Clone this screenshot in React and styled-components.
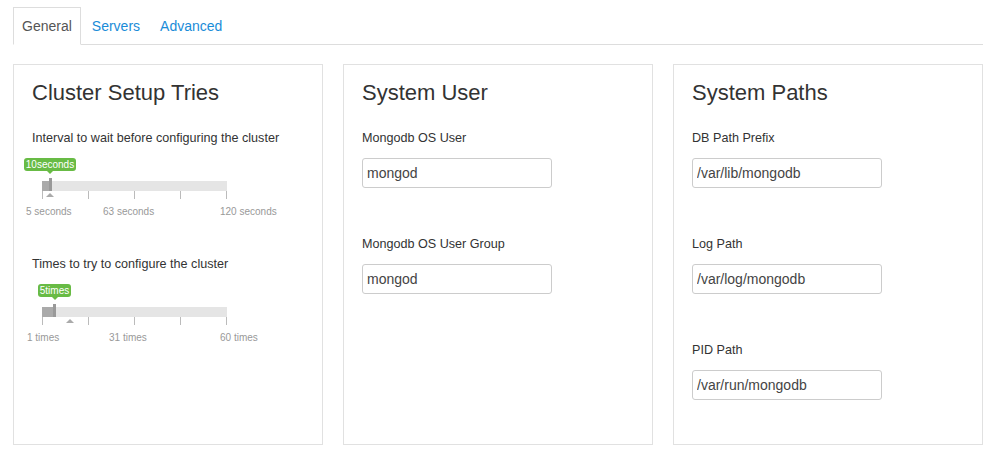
import React from 'react';
import styled, { createGlobalStyle } from 'styled-components';

const GlobalStyle = createGlobalStyle`
  body {
    margin: 0;
    background: #ffffff;
    font-family: "Liberation Sans", Arial, sans-serif;
    color: #333333;
  }
`;

const sliders = [
  {
    label: 'Interval to wait before configuring the cluster',
    value: '10seconds',
    handle: 7,
    marker: 8,
    tipLeft: -18,
    tipWidth: 52,
    grid: [
      { text: '5 seconds', left: -16 },
      { text: '63 seconds', left: 61 },
      { text: '120 seconds', left: 178 },
    ],
  },
  {
    label: 'Times to try to configure the cluster',
    value: '5times',
    handle: 11,
    marker: 28,
    tipLeft: -4,
    tipWidth: 33,
    grid: [
      { text: '1 times', left: -15 },
      { text: '31 times', left: 67 },
      { text: '60 times', left: 178 },
    ],
  },
];

const userFields = [
  { label: 'Mongodb OS User', value: 'mongod' },
  { label: 'Mongodb OS User Group', value: 'mongod' },
];

const pathFields = [
  { label: 'DB Path Prefix', value: '/var/lib/mongodb' },
  { label: 'Log Path', value: '/var/log/mongodb' },
  { label: 'PID Path', value: '/var/run/mongodb' },
];

const RangeSlider = ({ slider }) => (
  <SliderGroup>
    <FieldLabel>{slider.label}</FieldLabel>
    <TooltipRow>
      <Tooltip style={{ left: slider.tipLeft, width: slider.tipWidth }}>{slider.value}</Tooltip>
    </TooltipRow>
    <Track>
      <Fill style={{ width: slider.handle }} />
      <Handle style={{ left: slider.handle }} />
    </Track>
    <Ticks>
      {[0, 1, 2, 3, 4].map((i) => <Tick key={i} />)}
      <Marker style={{ left: slider.marker - 4 }} />
    </Ticks>
    <GridLabels>
      {slider.grid.map((g) => (
        <GridLabel key={g.text} style={{ left: g.left }}>{g.text}</GridLabel>
      ))}
    </GridLabels>
  </SliderGroup>
);

const TextField = ({ field }) => (
  <FieldGroup>
    <FieldLabel>{field.label}</FieldLabel>
    <Input defaultValue={field.value} />
  </FieldGroup>
);

const App = () => {
  return (
    <Page>
      <GlobalStyle />
      <TabList>
        <Tab $active>General</Tab>
        <Tab>Servers</Tab>
        <Tab>Advanced</Tab>
      </TabList>
      <Panels>
        <Panel>
          <PanelTitle>Cluster Setup Tries</PanelTitle>
          {sliders.map((s) => <RangeSlider key={s.value} slider={s} />)}
        </Panel>
        <Panel>
          <PanelTitle>System User</PanelTitle>
          {userFields.map((f) => <TextField key={f.label} field={f} />)}
        </Panel>
        <Panel>
          <PanelTitle>System Paths</PanelTitle>
          {pathFields.map((f) => <TextField key={f.label} field={f} />)}
        </Panel>
      </Panels>
    </Page>
  );
};

export default App;

const Page = styled.div`
  padding: 7px 0 0 13px;
  width: 970px;
`;

const TabList = styled.div`
  display: flex;
  border-bottom: 1px solid #dddddd;
`;

const Tab = styled.div`
  padding: 10px 8px;
  margin-right: 2px;
  margin-bottom: -1px;
  line-height: 16px;
  font-size: 14px;
  border: 1px solid ${(p) => (p.$active ? '#dddddd' : 'transparent')};
  border-bottom-color: ${(p) => (p.$active ? '#ffffff' : 'transparent')};
  background: ${(p) => (p.$active ? '#ffffff' : 'transparent')};
  color: ${(p) => (p.$active ? '#555555' : '#1a8cd8')};
  cursor: pointer;
`;

const Panels = styled.div`
  display: grid;
  grid-template-columns: repeat(3, 310px);
  gap: 20px;
  margin-top: 19px;
`;

const Panel = styled.div`
  box-sizing: border-box;
  height: 381px;
  border: 1px solid #e1e1e1;
  padding: 15px 18px;
`;

const PanelTitle = styled.h2`
  margin: 0 0 24px;
  font-size: 22px;
  line-height: 26px;
  font-weight: normal;
  color: #333333;
`;

const FieldLabel = styled.div`
  font-size: 12.6px;
  line-height: 16px;
  color: #333333;
`;

const FieldGroup = styled.div`
  margin-bottom: 48px;
  ${FieldLabel} {
    margin-bottom: 12px;
  }
`;

const Input = styled.input`
  box-sizing: border-box;
  display: block;
  width: 190px;
  height: 30px;
  padding: 0 4px;
  border: 1px solid #cccccc;
  border-radius: 3px;
  font-family: "Liberation Sans", Arial, sans-serif;
  font-size: 14px;
  color: #444444;
  outline: none;
`;

const SliderGroup = styled.div`
  margin-bottom: 38px;
  ${FieldLabel} {
    margin-bottom: 12px;
  }
`;

const TooltipRow = styled.div`
  position: relative;
  height: 20px;
  margin-left: 10px;
`;

const Tooltip = styled.div`
  position: absolute;
  top: 0;
  box-sizing: border-box;
  height: 13px;
  line-height: 13px;
  text-align: center;
  font-size: 10px;
  color: #ffffff;
  background: #68bb45;
  border-radius: 3px;
  &::after {
    content: '';
    position: absolute;
    left: 50%;
    top: 13px;
    margin-left: -3px;
    border: 3px solid transparent;
    border-top-color: #68bb45;
  }
`;

const Track = styled.div`
  position: relative;
  width: 185px;
  height: 10px;
  margin: 3px 0 0 10px;
  background: #e5e5e5;
`;

const Fill = styled.div`
  position: absolute;
  left: 0;
  top: 0;
  height: 10px;
  background: #aaaaaa;
`;

const Handle = styled.div`
  position: absolute;
  top: -3px;
  width: 3px;
  height: 13px;
  background: #999999;
`;

const Ticks = styled.div`
  position: relative;
  display: flex;
  justify-content: space-between;
  width: 185px;
  height: 8px;
  margin-left: 10px;
`;

const Tick = styled.span`
  width: 1px;
  height: 8px;
  background: #bbbbbb;
`;

const Marker = styled.span`
  position: absolute;
  top: 2px;
  width: 0;
  height: 0;
  border-left: 4px solid transparent;
  border-right: 4px solid transparent;
  border-bottom: 4px solid #aaaaaa;
`;

const GridLabels = styled.div`
  position: relative;
  height: 12px;
  margin: 7px 0 0 10px;
`;

const GridLabel = styled.span`
  position: absolute;
  top: 0;
  white-space: nowrap;
  font-size: 10px;
  line-height: 12px;
  color: #999999;
`;
